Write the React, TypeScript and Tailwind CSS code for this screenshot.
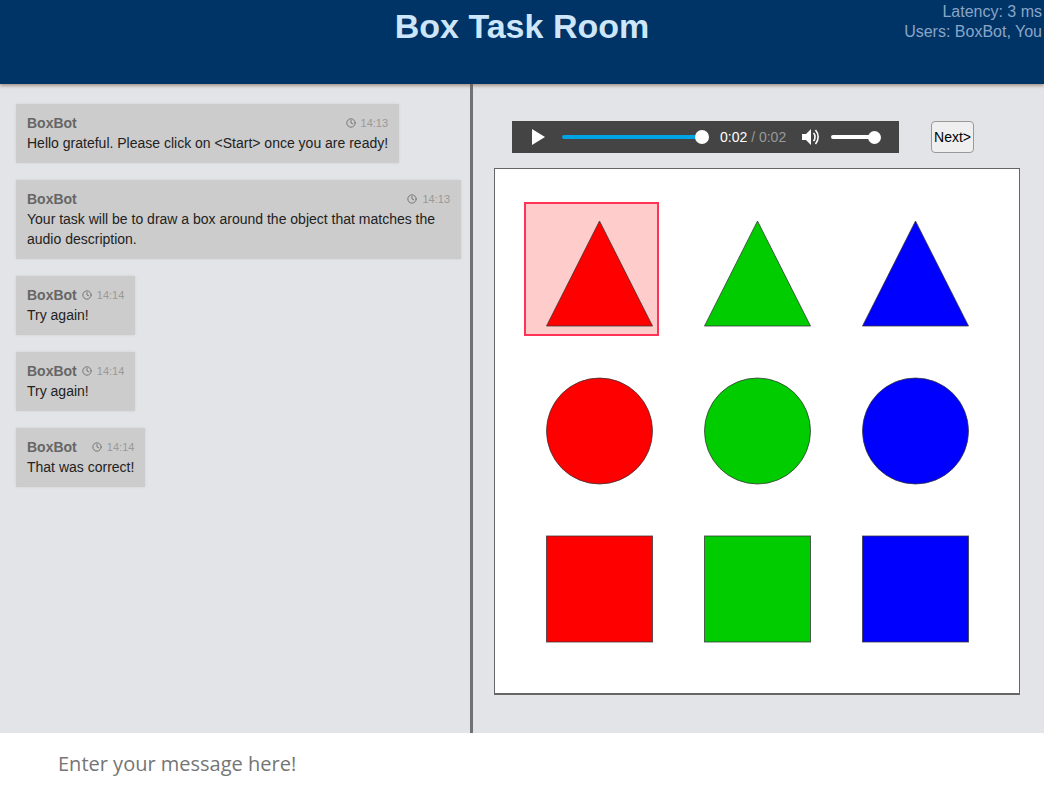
import { Clock } from "lucide-react";

type Message = { text: string; time: string };

const messages: Message[] = [
  { text: "Hello grateful. Please click on <Start> once you are ready!", time: "14:13" },
  { text: "Your task will be to draw a box around the object that matches the audio description.", time: "14:13" },
  { text: "Try again!", time: "14:14" },
  { text: "Try again!", time: "14:14" },
  { text: "That was correct!", time: "14:14" },
];

const colors = ["#ff0000", "#00cc00", "#0000ff"];
const columns = [0, 158, 316];

function ChatMessage({ text, time }: Message) {
  return (
    <div className="w-fit max-w-[445px] bg-[#cccccc] px-[11px] pt-[9px] pb-[10px] text-[14px] leading-[20px] text-[#222222] shadow-[0_0_3px_rgba(0,0,0,0.08)]">
      <div className="flex items-center justify-between gap-[5px]">
        <span className="font-bold text-[#666666]">BoxBot</span>
        <span className="flex items-center gap-[5px] pb-[1px] text-[11px] leading-[14px] text-[#999999]">
          <Clock size={10} strokeWidth={2.4} className="text-[#777777]" />
          {time}
        </span>
      </div>
      <p>{text}</p>
    </div>
  );
}

function AudioBar() {
  return (
    <div className="flex h-[32px] w-[387px] items-center bg-[#444444] pl-[20px]">
      <svg width="14" height="16" viewBox="0 0 14 16" className="mr-[16px] shrink-0">
        <path d="M0 0 L13 8 L0 16 Z" fill="#ffffff" />
      </svg>
      <div className="relative mr-[11px] h-[4px] w-[140px] rounded-full bg-[#00a4e4]">
        <div className="absolute top-[-5px] right-[-7px] h-[14px] w-[14px] rounded-full bg-white" />
      </div>
      <span className="ml-[7px] text-[14px] whitespace-nowrap text-white">
        0:02<span className="text-[#999999]"> / 0:02</span>
      </span>
      <svg width="18" height="18" viewBox="0 0 18 18" className="ml-[16px] shrink-0" fill="none">
        <path d="M0 6 H4 L9 1 V17 L4 12 H0 Z" fill="#ffffff" />
        <path d="M11.5 5 C13.5 7 13.5 11 11.5 13" stroke="#ffffff" strokeWidth="1.6" />
        <path d="M13.5 2 C17 6 17 12 13.5 16" stroke="#ffffff" strokeWidth="1.6" />
      </svg>
      <div className="relative ml-[11px] h-[4px] w-[44px] rounded-full bg-white">
        <div className="absolute top-[-4.5px] right-[-6px] h-[13px] w-[13px] rounded-full bg-white" />
      </div>
    </div>
  );
}

function ShapeBoard() {
  return (
    <svg width="524" height="524" viewBox="0 0 524 524" className="block">
      <rect x="30" y="34" width="133" height="132" fill="#ffcccc" stroke="#ff3355" strokeWidth="2" />
      {colors.map((fill, i) => (
        <g key={fill} fill={fill} stroke="#333333" strokeOpacity="0.75" strokeWidth="1">
          <path d={`M${104.5 + columns[i]} 52 L${157.5 + columns[i]} 157 L${51.5 + columns[i]} 157 Z`} />
          <circle cx={104.5 + columns[i]} cy="262" r="53" />
          <rect x={51.5 + columns[i]} y="367" width="106" height="106" />
        </g>
      ))}
    </svg>
  );
}

export default function App() {
  return (
    <div className="flex h-[796px] w-[1044px] flex-col overflow-hidden bg-[#e2e4e8] font-['Liberation_Sans',Arial,sans-serif]">
      <header className="relative z-10 flex h-[84px] shrink-0 justify-center bg-[#003366] shadow-[0_2px_3px_rgba(120,90,70,0.55)]">
        <h1 className="pt-[6px] text-[34px] leading-[40px] font-bold text-[#cde6fa]">Box Task Room</h1>
        <div className="absolute top-[2px] right-[2px] text-right text-[16px] leading-[20px] text-[#8aa5c6]">
          <div>Latency: 3 ms</div>
          <div>Users: BoxBot, You</div>
        </div>
      </header>

      <main className="flex min-h-0 flex-1">
        <section className="flex w-[473px] shrink-0 flex-col items-start gap-[17px] border-r-[3px] border-[#6f7275] pt-[20px] pl-[16px]">
          {messages.map((m, i) => (
            <ChatMessage key={i} {...m} />
          ))}
        </section>

        <section className="flex-1 pt-[37px] pl-[21px]">
          <div className="flex items-center pl-[18px]">
            <AudioBar />
            <button className="ml-[32px] flex h-[32px] w-[43px] items-center justify-center rounded-[4px] border border-[#999999] bg-[#efefef] text-[14px] text-black">
              Next&gt;
            </button>
          </div>
          <div className="mt-[15px] h-[527px] w-[526px] border border-b-2 border-[#666666] bg-white">
            <ShapeBoard />
          </div>
        </section>
      </main>

      <footer className="flex h-[63px] shrink-0 items-center bg-white pb-[1px] pl-[58px]">
        <input
          placeholder="Enter your message here!"
          className="w-full font-['Open_Sans',sans-serif] text-[20px] outline-none placeholder:text-[#757575]"
        />
      </footer>
    </div>
  );
}
